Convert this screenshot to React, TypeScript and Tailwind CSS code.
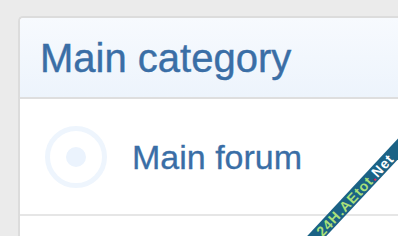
import React from 'react';

const font = { fontFamily: '"Liberation Sans", Arial, sans-serif' };

const ForumIcon: React.FC = () => (
  <svg width="64" height="64" viewBox="0 0 64 64" className="shrink-0">
    <circle cx="32" cy="32" r="28.5" fill="none" stroke="#eef5fd" strokeWidth="5" />
    <circle cx="32" cy="32" r="10" fill="#ebf3fd" />
  </svg>
);

export default function App() {
  return (
    <div className="relative min-h-screen h-[236px] overflow-hidden bg-[#ebebeb] pt-[16px] pl-[18px]" style={font}>
      <div className="h-full border-l-2 border-t-2 border-[#dcdcdc] rounded-tl-[5px] bg-white">
        {/* Category header */}
        <div className="flex h-[81px] items-center border-b-2 border-[#dedede] bg-gradient-to-b from-[#f7fafe] to-[#edf4fc] pl-[20px] rounded-tl-[4px]">
          <h2 className="text-[40px] leading-none text-[#3a6ea6] [-webkit-text-stroke:0.4px_#3a6ea6]">Main category</h2>
        </div>

        {/* Forum row */}
        <div className="flex h-[117px] items-center gap-[24px] border-b-2 border-[#e6e6e6] pl-[24px]">
          <ForumIcon />
          <span className="text-[34px] leading-none text-[#3a6ea6] [-webkit-text-stroke:0.3px_#3a6ea6]">Main forum</span>
        </div>
      </div>

      {/* Watermark ribbon */}
      <div className="absolute left-[245px] top-[188px] flex h-[14px] w-[220px] -rotate-[47deg] items-center justify-center bg-[#1b6285]">
        <span className="text-[14px] font-bold leading-none tracking-[1px] text-[#a9e07a]">
          24H.AEtot<span className="text-[#e0245e]">.</span><span className="text-white">Net</span>
        </span>
      </div>
    </div>
  );
}
